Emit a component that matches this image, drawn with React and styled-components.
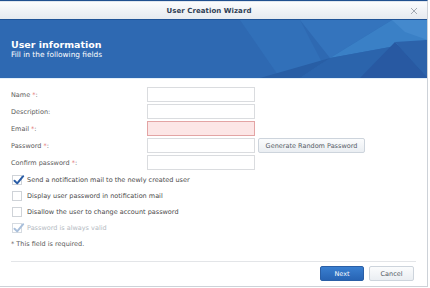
import React from "react";
import styled, { createGlobalStyle } from "styled-components";

const Global = createGlobalStyle`
  html, body { margin: 0; padding: 0; background: #ffffff; overflow: hidden; }
  body { font-family: "DejaVu Sans", Verdana, sans-serif; }
  * { box-sizing: border-box; }
`;

const Window = styled.div`
  width: 428px;
  height: 287px;
  display: flex;
  flex-direction: column;
  background: #ffffff;
  border-top: 1px solid #1f4f8e;
  border-right: 1px solid #cdd2d8;
  border-bottom: 1px solid #cdd2d8;
`;

const TitleBar = styled.div`
  height: 19px;
  display: grid;
  grid-template-columns: 1fr auto 1fr;
  align-items: center;
  background: linear-gradient(#fbfcfd, #e6eaef);
  border-top: 1px solid #dfe6ee;
  border-bottom: 1px solid #1f5396;
  padding-right: 9px;
`;

const Title = styled.div`
  grid-column: 2;
  font-size: 7px;
  font-weight: bold;
  color: #2f3e55;
  letter-spacing: 0.05px;
`;

const Close = styled.div`
  grid-column: 3;
  justify-self: end;
  width: 8px;
  height: 8px;
  display: flex;
`;

const Banner = styled.div`
  position: relative;
  height: 58px;
  background: #2e69b2;
  padding: 19px 11px 0;
  overflow: hidden;
  display: flex;
  flex-direction: column;
`;

const Decor = styled.svg`
  position: absolute;
  left: 0;
  top: 0;
`;

const BannerTitle = styled.div`
  position: relative;
  font-size: 9.5px;
  font-weight: bold;
  color: #ffffff;
  line-height: 11px;
`;

const BannerSub = styled.div`
  position: relative;
  font-size: 7.4px;
  color: #ffffff;
  line-height: 10px;
`;

const Body = styled.div`
  flex: 1;
  border-top: 1px solid #e3f0fa;
  padding: 8px 11px 0;
  display: flex;
  flex-direction: column;
`;

const Form = styled.div`
  display: grid;
  grid-template-columns: 133px 108px auto;
  grid-auto-rows: 15px;
  row-gap: 2px;
  column-gap: 3px;
  align-items: center;
`;

const Label = styled.div`
  grid-column: 1;
  font-size: 6.5px;
  color: #5a5a5a;
  white-space: nowrap;
`;

const Star = styled.span`
  color: #e07070;
`;

const Input = styled.div`
  grid-column: 2;
  height: 15px;
  border: 1px solid ${(p) => (p.$error ? "#e3a4a4" : "#dadcdf")};
  background: ${(p) => (p.$error ? "#fce6e6" : "#ffffff")};
`;

const Button = styled.div`
  height: 15px;
  padding: 0;
  display: flex;
  align-items: center;
  justify-content: center;
  white-space: nowrap;
  font-size: 6.5px;
  border-radius: 2px;
  color: ${(p) => (p.$primary ? "#ffffff" : "#555c66")};
  background: ${(p) =>
    p.$primary
      ? "linear-gradient(#3a7fd0, #2764b4)"
      : "linear-gradient(#fbfcfd, #eaeef2)"};
  border: 1px solid ${(p) => (p.$primary ? "#2a5fa6" : "#cdd4dc")};
  width: ${(p) => (p.$w ? p.$w + "px" : "auto")};
`;

const Checks = styled.div`
  margin-top: 2px;
  display: flex;
  flex-direction: column;
`;

const CheckRow = styled.div`
  height: 16px;
  display: flex;
  align-items: center;
  gap: 5px;
  padding-left: 1px;
  font-size: 6.5px;
  white-space: nowrap;
  color: ${(p) => (p.$disabled ? "#b4bac2" : "#4a4a4a")};
`;

const Box = styled.div`
  position: relative;
  width: 10px;
  height: 10px;
  border: 1px solid ${(p) => (p.$disabled ? "#d6dbe1" : "#cfd3d8")};
  background: #ffffff;
  flex: none;
`;

const Tick = styled.svg`
  position: absolute;
  left: 0px;
  top: -2px;
`;

const Note = styled.div`
  height: 16px;
  display: flex;
  align-items: center;
  font-size: 6.5px;
  color: #5a5a5a;
`;

const Separator = styled.div`
  margin-top: 9px;
  height: 1px;
  background: #e3e5e8;
`;

const Footer = styled.div`
  display: flex;
  justify-content: flex-end;
  gap: 5px;
  padding-top: 4px;
  padding-right: 2px;
`;

function Check({ checked, disabled, children }) {
  return (
    <CheckRow $disabled={disabled}>
      <Box $disabled={disabled}>
        {checked && (
          <Tick width="12" height="12" viewBox="0 0 12 12">
            <path
              d="M1.5 6.8 L4.2 9.4 L10.2 2.2"
              fill="none"
              stroke={disabled ? "#a9bfdb" : "#2a5da6"}
              strokeWidth="2"
              strokeLinecap="round"
              strokeLinejoin="round"
            />
          </Tick>
        )}
      </Box>
      {children}
    </CheckRow>
  );
}

export default function App() {
  return (
    <>
      <Global />
      <Window>
        <TitleBar>
          <Title>User Creation Wizard</Title>
          <Close>
            <svg width="8" height="8" viewBox="0 0 8 8">
              <path d="M1 1 L7 7 M7 1 L1 7" stroke="#a3aab3" strokeWidth="1" />
            </svg>
          </Close>
        </TitleBar>
        <Banner>
          <Decor width="428" height="58" viewBox="0 0 428 58">
            <polygon points="240,0 300,0 330,58 280,58" fill="#3170b9" />
            <polygon points="300,0 392,0 330,38" fill="#3474bd" />
            <polygon points="330,38 392,0 428,0 428,20" fill="#3a80c6" />
            <polygon points="330,38 428,20 428,58 300,58" fill="#2b64ac" />
            <polygon points="260,58 330,38 300,58" fill="#285ea5" />
            <polygon points="392,0 428,0 428,20 405,12" fill="#4489cd" />
            <polygon points="360,58 395,22 428,58" fill="#2859a2" />
            <polygon points="395,22 428,20 428,58" fill="#2c62aa" />
          </Decor>
          <BannerTitle>User information</BannerTitle>
          <BannerSub>Fill in the following fields</BannerSub>
        </Banner>
        <Body>
          <Form>
            <Label>
              Name <Star>*</Star>:
            </Label>
            <Input />
            <Label>Description:</Label>
            <Input />
            <Label>
              Email <Star>*</Star>:
            </Label>
            <Input $error />
            <Label>
              Password <Star>*</Star>:
            </Label>
            <Input />
            <Button $w={107}>Generate Random Password</Button>
            <Label>
              Confirm password <Star>*</Star>:
            </Label>
            <Input />
          </Form>
          <Checks>
            <Check checked>Send a notification mail to the newly created user</Check>
            <Check>Display user password in notification mail</Check>
            <Check>Disallow the user to change account password</Check>
            <Check checked disabled>
              Password is always valid
            </Check>
            <Note>* This field is required.</Note>
          </Checks>
          <Separator />
          <Footer>
            <Button $primary $w={44}>Next</Button>
            <Button $w={45}>Cancel</Button>
          </Footer>
        </Body>
      </Window>
    </>
  );
}
